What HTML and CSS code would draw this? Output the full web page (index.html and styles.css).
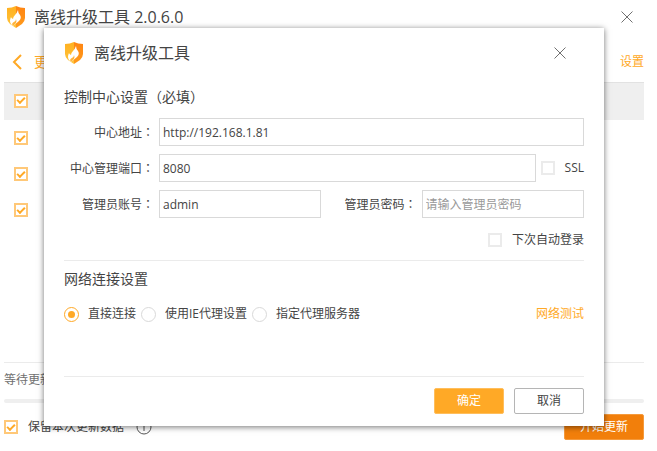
FILE: index.html
```html
<!DOCTYPE html>
<html lang="zh-CN">
<head>
    <meta charset="UTF-8">
    <meta name="viewport" content="width=device-width, initial-scale=1.0">
    <title>离线升级工具</title>
    <link rel="stylesheet" href="styles.css">
</head>
<body>
    <svg class="defs" width="0" height="0">
        <defs>
            <linearGradient id="gold" x1="0" y1="0" x2="0" y2="1">
                <stop offset="0" stop-color="#ffb020"/>
                <stop offset="1" stop-color="#ffc53c"/>
            </linearGradient>
            <linearGradient id="orange" x1="0" y1="0" x2="0" y2="1">
                <stop offset="0" stop-color="#ff8412"/>
                <stop offset="1" stop-color="#ff9c1c"/>
            </linearGradient>
            <symbol id="logo" viewBox="0 0 20 22">
                <path fill="url(#gold)" d="M10 0 Q6 2 1 2 V12 Q1 15 4 18 L10 22 Z"/>
                <path fill="url(#orange)" d="M10 0 Q14 2 19 2 V12 Q19 15 16 18 L10 22 Z"/>
                <path fill="#fff" d="M12 4 Q12 7 14 9 Q16 12 13 15 L7 20 L5 18 Q3 15 5 11 Q5 12 7 13 Q7 11 9 9 Q11 7 12 4 Z"/>
                <path fill="#ffb43a" d="M10 13 Q11 15 10 17 L7 20 L6 18 Q7 16 8 16 Q10 15 10 13 Z"/>
            </symbol>
            <symbol id="close" viewBox="0 0 12 12">
                <path fill="none" stroke="#707070" d="M.5 .5 L11.5 11.5 M11.5 .5 L.5 11.5"/>
            </symbol>
        </defs>
    </svg>

    <main class="window">
        <header class="titlebar">
            <svg class="logo"><use href="#logo"/></svg>
            <h1>离线升级工具 2.0.6.0</h1>
            <button class="close" type="button" aria-label="关闭"><svg><use href="#close"/></svg></button>
        </header>
        <nav class="toolbar">
            <a href="#" class="back">
                <svg width="10" height="16" viewBox="0 0 10 16"><path fill="none" stroke="#ffa926" stroke-width="2" d="M9 1 L2 8 L9 15"/></svg>
                更新
            </a>
            <a href="#" class="settings">设置</a>
        </nav>
        <ul class="list">
            <li class="selected"><input type="checkbox" aria-label="项目一" checked></li>
            <li><input type="checkbox" aria-label="项目二" checked></li>
            <li><input type="checkbox" aria-label="项目三" checked></li>
            <li><input type="checkbox" aria-label="项目四" checked></li>
        </ul>
        <div class="status">等待更新</div>
        <div class="progress"></div>
        <footer class="bottom">
            <label class="check"><input type="checkbox" checked>保留本次更新数据</label>
            <svg class="info" width="16" height="16" viewBox="0 0 16 16"><circle cx="8" cy="8" r="7" fill="none" stroke="#555"/><path stroke="#555" d="M8 4 V5 M8 6 V12"/></svg>
            <button class="btn start" type="button">开始更新</button>
        </footer>
    </main>

    <form class="dialog" role="dialog" aria-labelledby="dialogTitle">
        <header class="dialog-head">
            <svg class="logo"><use href="#logo"/></svg>
            <h2 id="dialogTitle">离线升级工具</h2>
            <button class="close" type="button" aria-label="关闭"><svg><use href="#close"/></svg></button>
        </header>
        <section class="center">
            <h3>控制中心设置（必填）</h3>
            <div class="row">
                <label class="name" for="address">中心地址<span class="colon" lang="zh-TW">：</span></label>
                <input type="text" id="address" value="http://192.168.1.81">
            </div>
            <div class="row">
                <label class="name" for="port">中心管理端口<span class="colon" lang="zh-TW">：</span></label>
                <input type="text" id="port" value="8080">
                <label class="check"><input type="checkbox">SSL</label>
            </div>
            <div class="row">
                <label class="name" for="user">管理员账号<span class="colon" lang="zh-TW">：</span></label>
                <input type="text" id="user" value="admin">
                <label class="name second" for="password">管理员密码<span class="colon" lang="zh-TW">：</span></label>
                <input type="password" id="password" placeholder="请输入管理员密码">
            </div>
            <div class="row auto">
                <label class="check"><input type="checkbox">下次自动登录</label>
            </div>
        </section>
        <section class="network">
            <h3>网络连接设置</h3>
            <div class="row">
                <label class="check"><input type="radio" name="proxy" checked>直接连接</label>
                <label class="check"><input type="radio" name="proxy">使用IE代理设置</label>
                <label class="check"><input type="radio" name="proxy">指定代理服务器</label>
                <a href="#" class="test">网络测试</a>
            </div>
        </section>
        <footer class="actions">
            <button class="btn ok" type="submit">确定</button>
            <button class="btn cancel" type="button">取消</button>
        </footer>
    </form>
</body>
</html>
```
FILE: styles.css
```css
*, *::before {
    box-sizing: border-box;
}
body {
    margin: 0;
    background-color: #fff;
    color: #444;
    font-family: "Open Sans", "Noto Sans CJK SC", sans-serif;
    font-size: 12px;
    line-height: 18px;
}
h1, h2, h3, ul {
    margin: 0;
    padding: 0;
    font-weight: normal;
}
h1, h2 {
    font-size: 16px;
    line-height: 24px;
}
h3 {
    font-size: 14px;
    line-height: 20px;
}
a {
    color: #ffa926;
    text-decoration: none;
}
input, button {
    font: inherit;
    color: inherit;
    margin: 0;
}
.defs {
    position: absolute;
}
.logo {
    width: 20px;
    height: 22px;
}
.close {
    display: flex;
    margin-left: auto;
    padding: 0;
    border: none;
    background: none;
    cursor: pointer;
}
.close svg {
    width: 12px;
    height: 12px;
}

/* main window */
.window {
    display: flex;
    flex-direction: column;
    min-height: 100vh;
    padding: 0 13px 11px 4px;
}
.titlebar {
    display: flex;
    align-items: center;
    gap: 8px;
    height: 34px;
    padding: 0 11px 0 2px;
}
.toolbar {
    display: flex;
    align-items: center;
    justify-content: space-between;
    height: 48px;
    padding-top: 8px;
}
.back {
    display: flex;
    align-items: center;
    gap: 12px;
    padding-left: 8px;
    font-size: 14px;
}
.list {
    flex: 1;
    list-style: none;
    border-bottom: 1px solid #ebebeb;
}
.list li {
    display: flex;
    align-items: center;
    height: 36px;
    padding-left: 10px;
}
.list .selected {
    height: 38px;
    padding-bottom: 2px;
    background-color: #efefef;
    border-top: 1px solid #e2e2e2;
}
.status {
    padding: 8px 0;
    color: #707070;
}
.progress {
    height: 4px;
    margin: 2px 0 11px;
    border-radius: 2px;
    background-color: #efefef;
}
.bottom {
    display: flex;
    align-items: center;
}
.info {
    margin-left: 12px;
}
.start {
    width: 80px;
    margin-left: auto;
    background-color: #f27f0b;
    border-color: #f59a3c;
    color: #fff;
}

/* controls */
.btn {
    height: 26px;
    padding: 0;
    border-width: 1px;
    border-style: solid;
    border-radius: 2px;
    line-height: 24px;
    cursor: pointer;
}
.check {
    display: flex;
    align-items: center;
    gap: 10px;
}
input[type="checkbox"], input[type="radio"] {
    appearance: none;
    display: grid;
    place-items: center;
    width: 14px;
    height: 14px;
    border: 2px solid #ebebeb;
    background-color: #fff;
}
input[type="checkbox"]:checked {
    border-color: #ffc878;
}
input[type="checkbox"]:checked::before {
    content: "";
    width: 8px;
    height: 5px;
    margin-bottom: 2px;
    border: solid #ffa926;
    border-width: 0 0 2px 2px;
    transform: rotate(-45deg);
}
input[type="radio"] {
    width: 15px;
    height: 15px;
    border: 1px solid #d9d9d9;
    border-radius: 50%;
}
input[type="radio"]:checked {
    border-color: #ffa926;
}
input[type="radio"]:checked::before {
    content: "";
    width: 7px;
    height: 7px;
    border-radius: 50%;
    background-color: #ffa926;
}
input[type="text"], input[type="password"] {
    flex: 1;
    min-width: 0;
    height: 28px;
    padding: 0 3px;
    border: 1px solid #d9d9d9;
    background-color: #fff;
}
input::placeholder {
    color: #999;
}

/* settings dialog */
.dialog {
    position: absolute;
    top: 28px;
    left: 44px;
    right: 53px;
    padding: 0 20px 12px;
    background-color: #fff;
    box-shadow: 0 1px 6px rgba(0,0,0,.55);
}
.dialog-head {
    display: flex;
    align-items: center;
    gap: 10px;
    height: 50px;
    padding-right: 18px;
}
.row {
    display: flex;
    align-items: center;
    gap: 5px;
}
.center {
    display: flex;
    flex-direction: column;
    gap: 8px;
    padding: 9px 0 11px;
    border-bottom: 1px solid #ebebeb;
}
.center h3 {
    margin-bottom: 3px;
}
.name {
    width: 90px;
    text-align: right;
    white-space: nowrap;
}
.second {
    width: auto;
    margin-left: 18px;
}
.colon {
    font-family: "Noto Sans CJK TC", sans-serif;
}
.auto {
    justify-content: flex-end;
    padding-top: 5px;
}
.network {
    padding: 8px 0 53px;
    border-bottom: 1px solid #ebebeb;
}
.network .row {
    padding-top: 16px;
}
.network .check {
    gap: 9px;
}
.test {
    margin-left: auto;
}
.actions {
    display: flex;
    justify-content: flex-end;
    gap: 10px;
    padding-top: 11px;
}
.actions .btn {
    width: 70px;
}
.ok {
    background-color: #ffa926;
    border-color: #ffbe5c;
    color: #fff;
}
.cancel {
    background-color: #fff;
    border-color: #b5b5b5;
}
```
